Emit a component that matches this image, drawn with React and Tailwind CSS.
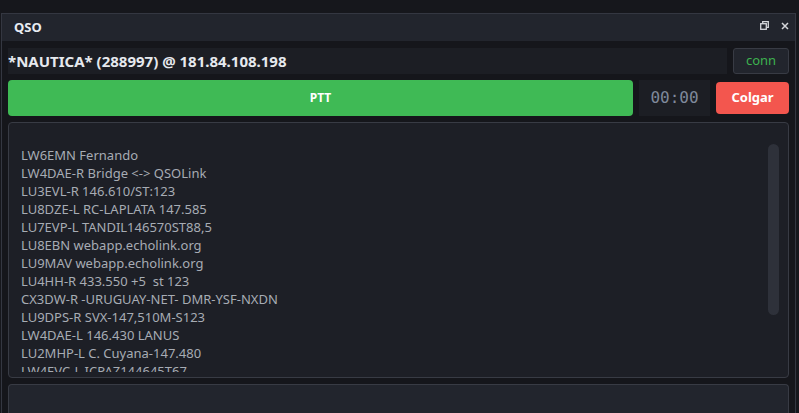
import React from 'react';

const nodes = [
    'LW6EMN Fernando',
    'LW4DAE-R Bridge <-> QSOLink',
    'LU3EVL-R 146.610/ST:123',
    'LU8DZE-L RC-LAPLATA 147.585',
    'LU7EVP-L TANDIL146570ST88,5',
    'LU8EBN webapp.echolink.org',
    'LU9MAV webapp.echolink.org',
    'LU4HH-R 433.550 +5  st 123',
    'CX3DW-R -URUGUAY-NET- DMR-YSF-NXDN',
    'LU9DPS-R SVX-147,510M-S123',
    'LW4DAE-L 146.430 LANUS',
    'LU2MHP-L C. Cuyana-147.480',
    'LW4EVC-L ICPAZ144645T67',
];

const App = () => {
    return (
        <div className="w-[799px] h-[413px] overflow-hidden bg-[#16171c] font-['Noto_Sans',sans-serif] pt-[13px]">
            <div className="ml-[1px] w-[795px] h-[400px] border-l border-r border-t border-[#343741] flex flex-col bg-[#15161b]">
                {/* title bar */}
                <div className="h-[27px] shrink-0 bg-[#22252d] flex items-center justify-between pl-[12px] pr-[6px]">
                    <span className="text-[13px] font-bold text-[#e8ecf2]">QSO</span>
                    <div className="flex items-center gap-[12px] pb-[4px]">
                        <svg width="9" height="9" viewBox="0 0 9 9" fill="none" stroke="#d4d6da" strokeWidth="1.3">
                            <rect x="0.7" y="2.7" width="5.6" height="5.6" />
                            <path d="M2.7 2.5V0.7h5.6v5.6H6.5" />
                        </svg>
                        <svg width="8" height="8" viewBox="0 0 8 8" stroke="#d4d6da" strokeWidth="1.5">
                            <path d="M1 1l6 6M7 1l-6 6" />
                        </svg>
                    </div>
                </div>

                <div className="flex-1 flex flex-col px-[6px] pt-[7px] gap-[6px] min-h-0">
                    {/* station row */}
                    <div className="flex items-stretch gap-[6px] h-[26px] shrink-0">
                        <div className="flex-1 bg-[#1c1e24] flex items-center">
                            <span className="text-[15px] font-bold text-[#e6e9ee]">*NAUTICA* (288997) @ 181.84.108.198</span>
                        </div>
                        <div className="w-[56px] rounded-[3px] border border-[#383b44] bg-[#22252d] flex items-center justify-center">
                            <span className="text-[13px] text-[#3db34f]">conn</span>
                        </div>
                    </div>

                    {/* ptt row */}
                    <div className="flex items-center gap-[6px] h-[36px] shrink-0">
                        <button className="flex-1 h-full rounded-[4px] bg-[#3fba55] text-white text-[12px] font-bold">PTT</button>
                        <div className="w-[71px] h-full bg-[#1c1e24] flex items-center justify-center">
                            <span className="font-['DejaVu_Sans_Mono',monospace] text-[16px] text-[#7f899b]">00:00</span>
                        </div>
                        <button className="w-[73px] h-[32px] rounded-[4px] bg-[#f3564e] text-white text-[13px] font-bold">Colgar</button>
                    </div>

                    {/* node list */}
                    <div className="h-[256px] shrink-0 rounded-[4px] border border-[#383b44] bg-[#1d1f26] flex items-start overflow-hidden">
                        <div className="flex-1 h-[249px] pl-[12px] pt-[23px] overflow-hidden">
                            {nodes.map((n) => (
                                <div key={n} className="text-[13px] leading-[18px] text-[#a7acb4] whitespace-pre">{n}</div>
                            ))}
                        </div>
                        <div className="w-[20px] pt-[21px] pr-[8px]">
                            <div className="w-[11px] h-[171px] rounded-full bg-[#2e313a]" />
                        </div>
                    </div>

                    {/* bottom panel */}
                    <div className="flex-1 rounded-t-[4px] border-t border-l border-r border-[#383b44] bg-[#22252d]" />
                </div>
            </div>
        </div>
    );
};

export default App;
